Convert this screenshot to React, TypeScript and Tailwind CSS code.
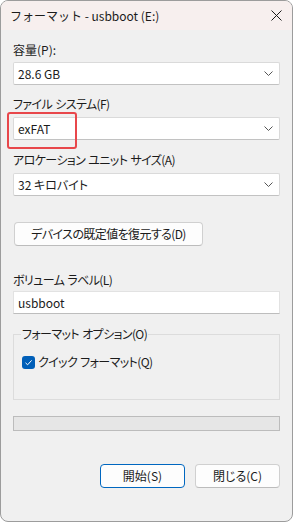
const FONT = "font-['Noto_Sans_CJK_JP',sans-serif]";
const KANA = "[font-feature-settings:'palt'] tracking-[-0.6px] [word-spacing:1px]";

function Label({ text, className = '' }: { text: string; className?: string }) {
  return <div className={`h-[16px] leading-[16px] text-[12px] text-[#1b1b1b] ${KANA} ${className}`}>{text}</div>;
}

function Chevron() {
  return (
    <svg width="9" height="5" viewBox="0 0 9 5">
      <path d="M0.5 0.5 L4.5 4.5 L8.5 0.5" fill="none" stroke="#555" strokeWidth="1" />
    </svg>
  );
}

function Select({ value }: { value: string }) {
  return (
    <div className="flex h-[23px] items-center justify-between rounded-[2px] border border-[#dadada] border-b-[#c2c2c2] bg-white pl-[4px] pr-[6px] text-[12px] text-[#1b1b1b] [font-feature-settings:'palt']">
      <span>{value}</span>
      <Chevron />
    </div>
  );
}

function Button({ text, primary = false, className = '' }: { text: string; primary?: boolean; className?: string }) {
  return (
    <button
      className={`flex h-[24px] items-center justify-center rounded-[4px] border bg-[#fdfdfd] text-[12px] text-[#1b1b1b] [font-feature-settings:'palt'] tracking-[-0.6px] ${
        primary ? 'border-[#0067c0]' : 'border-[#d0d0d0] border-b-[#bcbcbc]'
      } ${className}`}
    >
      {text}
    </button>
  );
}

export default function App() {
  return (
    <div className={`h-[523px] w-[294px] bg-white ${FONT}`}>
      <div className="flex h-[522px] w-[293px] flex-col overflow-hidden rounded-[8px] border border-[#9c9c9c] bg-[#f0f0f0]">
        {/* Title bar */}
        <div className="flex h-[29px] shrink-0 items-center justify-between bg-[#f7efee] pl-[9px] pr-[9px]">
          <span className="text-[12px] text-[#1b1b1b]">フォーマット - usbboot (E:)</span>
          <svg width="11" height="11" viewBox="0 0 11 11" className="mr-[1px]">
            <path d="M0.5 0.5 L10.5 10.5 M10.5 0.5 L0.5 10.5" stroke="#1b1b1b" strokeWidth="1" />
          </svg>
        </div>

        <div className="flex flex-col px-[12px] pt-[12px]">
          <Label text="容量(P):" className="tracking-normal" />
          <div className="mt-[4px]">
            <Select value="28.6 GB" />
          </div>

          <Label text="ファイル システム(F)" className="mt-[11px]" />
          <div className="relative mt-[5px]">
            <Select value="exFAT" />
            <div className="absolute left-[-6px] top-[-5px] h-[37px] w-[70px] rounded-[3px] border-2 border-[#e8474b]" />
          </div>

          <Label text="アロケーション ユニット サイズ(A)" className="mt-[12px]" />
          <div className="mt-[5px]">
            <Select value="32 キロバイト" />
          </div>

          <Button text="デバイスの既定値を復元する(D)" className="ml-[1px] mt-[26px] w-[189px]" />

          <Label text="ボリューム ラベル(L)" className="mt-[26px]" />
          <div className="mt-[3px] flex h-[23px] items-center border border-[#e2e2e2] border-b-[#bdbdbd] bg-white pl-[4px] text-[12px] text-[#1b1b1b]">
            usbboot
          </div>

          <div className="relative mt-[20px] h-[66px] border border-[#dcdcdc] px-[8px] pt-[19px]">
            <span className={`absolute left-[7px] top-[-9px] bg-[#f0f0f0] px-[1px] text-[12px] leading-[16px] text-[#1b1b1b] ${KANA}`}>
              フォーマット オプション(O)
            </span>
            <div className="flex items-center gap-[3px]">
              <div className="flex h-[13px] w-[13px] items-center justify-center rounded-[3px] bg-[#005fb8]">
                <svg width="9" height="9" viewBox="0 0 9 9">
                  <path d="M1.5 4.8 L3.6 6.8 L7.6 2.4" fill="none" stroke="white" strokeWidth="1" />
                </svg>
              </div>
              <span className={`text-[12px] leading-[16px] text-[#1b1b1b] ${KANA}`}>クイック フォーマット(Q)</span>
            </div>
          </div>

          <div className="mt-[16px] h-[15px] border border-[#bcbcbc] bg-[#e6e6e6]" />

          <div className="mt-[33px] flex justify-end gap-[10px]">
            <Button text="開始(S)" primary className="w-[85px] tracking-normal" />
            <Button text="閉じる(C)" className="w-[85px] tracking-normal" />
          </div>
        </div>
      </div>
    </div>
  );
}
